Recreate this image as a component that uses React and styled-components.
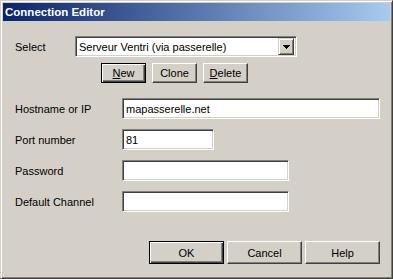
import React, { useState } from 'react'
import styled, { createGlobalStyle, css } from 'styled-components'

const App = () => {
  const [host, setHost] = useState('mapasserelle.net')
  const [port, setPort] = useState('81')
  const [password, setPassword] = useState('')
  const [channel, setChannel] = useState('')

  return (
    <>
      <GlobalStyle />
      <Window>
        <TitleBar>Connection Editor</TitleBar>
        <Body>
          <SelectRow>
            <Label $w={60}>Select</Label>
            <Combo>
              <ComboText>Serveur Ventri (via passerelle)</ComboText>
              <DropButton>
                <svg width="7" height="4" viewBox="0 0 7 4" shapeRendering="crispEdges">
                  <path d="M0 0h7v1H0zM1 1h5v1H1zM2 2h3v1H2zM3 3h1v1H3z" fill="#000" />
                </svg>
              </DropButton>
            </Combo>
          </SelectRow>
          <ActionRow>
            <Button $w={45} $h={20} $default>
              <u>N</u>ew
            </Button>
            <Button $w={45} $h={20}>Clone</Button>
            <Button $w={45} $h={20}>
              <u>D</u>elete
            </Button>
          </ActionRow>
          <Form>
            <FieldRow>
              <Label $w={107}>Hostname or IP</Label>
              <Input $w={258} value={host} onChange={e => setHost(e.target.value)} />
            </FieldRow>
            <FieldRow>
              <Label $w={107}>Port number</Label>
              <Input
                $w={92}
                value={port}
                onChange={e => setPort(e.target.value.replace(/[^0-9]/g, ''))}
              />
            </FieldRow>
            <FieldRow>
              <Label $w={107}>Password</Label>
              <Input
                $w={167}
                type="password"
                value={password}
                onChange={e => setPassword(e.target.value)}
              />
            </FieldRow>
            <FieldRow>
              <Label $w={107}>Default Channel</Label>
              <Input $w={167} value={channel} onChange={e => setChannel(e.target.value)} />
            </FieldRow>
          </Form>
          <Footer>
            <Button $w={75} $h={23} $default>OK</Button>
            <Button $w={75} $h={23}>Cancel</Button>
            <Button $w={75} $h={23}>Help</Button>
          </Footer>
        </Body>
      </Window>
    </>
  )
}

export default App

const GlobalStyle = createGlobalStyle`
  html, body {
    margin: 0;
    padding: 0;
    background: #d4d0c8;
  }
  * {
    box-sizing: border-box;
  }
`
const Window = styled.div`
  display: flex;
  flex-direction: column;
  width: 393px;
  height: 279px;
  padding: 2px;
  background: #d4d0c8;
  border: 1px solid;
  border-color: #d4d0c8 #404040 #404040 #d4d0c8;
  box-shadow: inset 1px 1px #fff, inset -1px -1px #808080;
  font-family: "Liberation Sans", Arial, sans-serif;
  font-size: 11px;
  color: #000;
`
const TitleBar = styled.div`
  display: flex;
  align-items: center;
  height: 18px;
  padding-left: 2px;
  background: linear-gradient(to right, #0a246a, #a6caf0);
  color: #fff;
  font-weight: bold;
  font-size: 11.5px;
`
const Body = styled.div`
  display: flex;
  flex-direction: column;
  flex: 1;
  padding: 15px 10px 0 12px;
`
const SelectRow = styled.div`
  display: flex;
  align-items: center;
  height: 21px;
`
const Label = styled.span`
  width: ${p => p.$w}px;
  flex-shrink: 0;
  white-space: nowrap;
`
const Combo = styled.div`
  display: flex;
  align-items: center;
  width: 222px;
  height: 21px;
  background: #fff;
  border: 1px solid;
  border-color: #808080 #fff #fff #808080;
  box-shadow: inset 1px 1px #404040, inset -1px -1px #d4d0c8;
  padding: 2px;
`
const ComboText = styled.span`
  flex: 1;
  padding-left: 1px;
  white-space: nowrap;
  overflow: hidden;
`
const DropButton = styled.div`
  display: flex;
  align-items: center;
  justify-content: center;
  width: 16px;
  height: 17px;
  background: #d4d0c8;
  border: 1px solid;
  border-color: #d4d0c8 #404040 #404040 #d4d0c8;
  box-shadow: inset 1px 1px #fff, inset -1px -1px #808080;
`
const ActionRow = styled.div`
  display: flex;
  gap: 6px;
  margin-top: 6px;
  padding-left: 86px;
`
const Button = styled.button`
  display: flex;
  align-items: center;
  justify-content: center;
  width: ${p => p.$w}px;
  height: ${p => p.$h}px;
  margin: 0;
  padding: 0;
  font: inherit;
  color: #000;
  background: #d4d0c8;
  border: 1px solid;
  border-color: #fff #404040 #404040 #fff;
  box-shadow: inset -1px -1px #808080, inset 1px 1px #d4d0c8;
  ${p => p.$default && css`
    border-color: #000;
    box-shadow: inset 1px 1px #fff, inset -1px -1px #404040, inset -2px -2px #808080;
  `}

  u {
    text-decoration-thickness: 1px;
    text-underline-offset: 1px;
  }
`
const Form = styled.div`
  display: flex;
  flex-direction: column;
  gap: 10px;
  margin-top: 15px;
`
const FieldRow = styled.div`
  display: flex;
  align-items: center;
  height: 21px;
`
const Input = styled.input`
  width: ${p => p.$w}px;
  height: 21px;
  margin: 0;
  padding: 0 3px;
  font: inherit;
  color: #000;
  background: #fff;
  border: 1px solid;
  border-color: #808080 #fff #fff #808080;
  box-shadow: inset 1px 1px #404040, inset -1px -1px #d4d0c8;
  outline: none;
`
const Footer = styled.div`
  display: flex;
  justify-content: flex-end;
  gap: 3px;
  margin-top: 29px;
`
